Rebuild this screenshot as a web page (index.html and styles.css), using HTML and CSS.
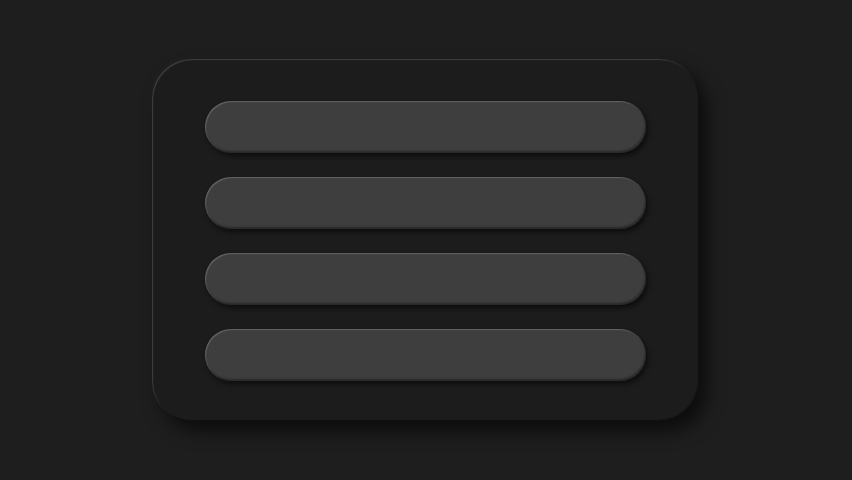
FILE: index.html
```html
<!DOCTYPE html>
<html>
<head>
<meta charset="utf-8">
<link rel="stylesheet" href="styles.css">
</head>
<body>
<div class="stage">
  <div class="card">
    <div class="bar"></div>
    <div class="bar"></div>
    <div class="bar"></div>
    <div class="bar"></div>
  </div>
</div>
</body>
</html>
```

FILE: styles.css
```css
html, body {
  margin: 0;
  padding: 0;
  background: #1e1e1e;
  width: 852px;
  height: 480px;
  overflow: hidden;
}
.stage {
  padding: 59px 0 0 152px;
}
.card {
  box-sizing: border-box;
  width: 547px;
  height: 362px;
  border-radius: 40px;
  background: #1c1c1c;
  padding: 42px 53px 0 53px;
  display: flex;
  flex-direction: column;
  gap: 24px;
  box-shadow:
    inset 1px 1px 1px rgba(255,255,255,0.16),
    inset -1px -1px 1px rgba(0,0,0,0.4),
    8px 10px 18px rgba(0,0,0,0.6),
    -2px -2px 6px rgba(255,255,255,0.02);
}
.bar {
  height: 52px;
  border-radius: 26px;
  background: #3e3e3e;
  box-shadow:
    inset 1px 1px 1px rgba(255,255,255,0.2),
    inset -1px -2px 2px rgba(0,0,0,0.35),
    2px 3px 5px rgba(0,0,0,0.55);
}
```
